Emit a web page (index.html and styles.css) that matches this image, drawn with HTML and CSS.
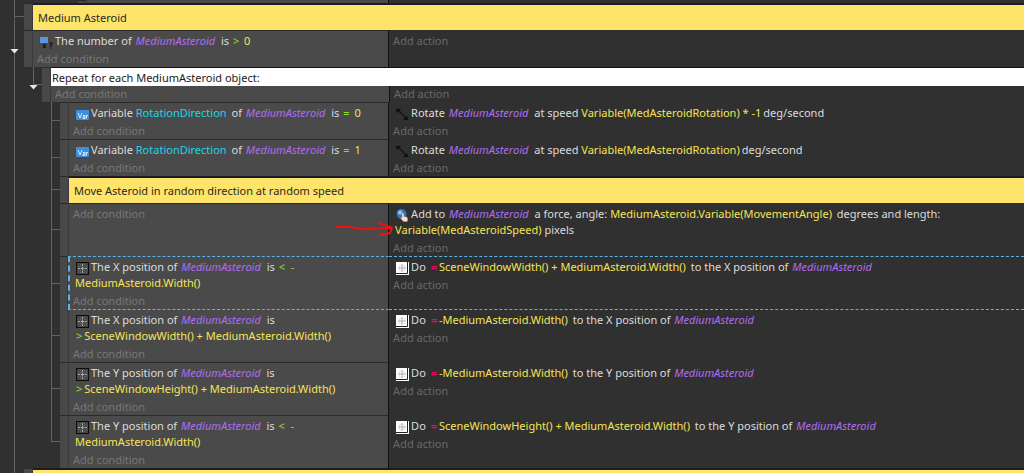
FILE: index.html
```
<!DOCTYPE html>
<html lang="en">
<head>
  <meta charset="UTF-8">
  <title>Events Sheet</title>
  <link rel="stylesheet" href="styles.css">
</head>
<body>
  <svg class="defs" width="0" height="0">
    <symbol id="icon-count" viewBox="0 0 13 13">
      <rect x="0" y="1" width="8" height="6" fill="#5b93e0"/>
      <path d="M3 8l3 4M6 8l-3 4M9.500 7.500q1.500-1.500 2.500 0q0 1-1.500 2v1M10.500 11.500v1" stroke="#111" stroke-width="1.200" fill="none"/>
    </symbol>
    <symbol id="icon-var" viewBox="0 0 13 13">
      <rect x="0" y="2" width="13" height="10" rx="1" fill="#3f8fe0"/>
      <path d="M2 5l2 5l2-5M7 7.500h2v3h-2v-1.500h2M10.500 10.500v-3h1.500" stroke="#d5e8fa" fill="none"/>
    </symbol>
    <symbol id="icon-rotate" viewBox="0 0 13 13">
      <path d="M2 2l9 9" stroke="#111" stroke-width="1.200"/>
      <path d="M0 1h5l-4 4zM12 12h-5l4-4z" fill="#0c0c0c"/>
    </symbol>
    <symbol id="icon-force" viewBox="0 0 13 13">
      <circle cx="5.500" cy="5" r="5" fill="#2f74c4"/>
      <circle cx="4" cy="3.500" r="2.200" fill="#8dbdec"/>
      <path d="M6 4.500q1-1 1.800 0v3l3 .5q1.500 1 .5 4.500h-4l-2.500-3q0-1.500 1.200-.5z" fill="#fbe0c0" stroke="#b88a62" stroke-width=".4"/>
    </symbol>
    <symbol id="icon-pos" viewBox="0 0 13 13">
      <rect x=".5" y=".5" width="12" height="12" fill="#484848" stroke="#0c0c0c"/>
      <path d="M6.500 2v9M2 6.500h9" stroke="#aaa"/>
      <path d="M4.500 2v9M8.500 2v9M2 4.500h9M2 8.500h9" stroke="#666" stroke-dasharray="1 1"/>
    </symbol>
    <symbol id="icon-set" viewBox="0 0 13 13">
      <rect width="13" height="13" fill="#fff"/>
      <path d="M11.500 0v11.500H0" stroke="#222" fill="none"/>
      <path d="M6 2v8M2 6h8" stroke="#aaa"/>
      <path d="M3.500 3.500h5v5h-5z" stroke="#ccc" stroke-dasharray="1 1" fill="none"/>
    </symbol>
  </svg>

  <main class="sheet">
    <div class="row stub">
      <div class="left"><i class="rail"></i><i class="rail-gap"></i><i class="handle"></i><div class="conditions"></div></div>
      <div class="actions"></div>
    </div>

    <div class="comment-row">
      <i class="rail tick"></i><i class="handle"></i>
      <p class="comment">Medium Asteroid</p>
    </div>

    <div class="row">
      <div class="left">
        <div class="rail"><button class="fold" aria-label="Fold event"></button></div><i class="handle"></i>
        <div class="conditions">
          <p><svg class="icon"><use href="#icon-count"/></svg>The number of <em>MediumAsteroid</em> is <b class="op">&gt;</b> <b>0</b></p>
          <button class="add">Add condition</button>
        </div>
      </div>
      <div class="actions"><button class="add">Add action</button></div>
    </div>

    <div class="repeat">
      <div class="rail"></div>
      <div class="rail sub"><button class="fold" aria-label="Fold loop"></button></div><i class="handle"></i>
      <div class="repeat-body">
        <p class="repeat-title">Repeat for each MediumAsteroid object:</p>
        <div class="repeat-cells">
          <div class="conditions"><button class="add">Add condition</button></div>
          <div class="actions"><button class="add">Add action</button></div>
        </div>
      </div>
    </div>

    <div class="row">
      <div class="left">
        <i class="rail"></i><i class="rail deep tick"></i><i class="handle"></i>
        <div class="conditions">
          <p><svg class="icon"><use href="#icon-var"/></svg>Variable <span class="var">RotationDirection</span> of <em>MediumAsteroid</em> is <b class="op">=</b> <b>0</b></p>
          <button class="add">Add condition</button>
        </div>
      </div>
      <div class="actions">
        <p><svg class="icon"><use href="#icon-rotate"/></svg>Rotate <em>MediumAsteroid</em> at speed <b class="arg">Variable(MedAsteroidRotation) * -1</b>deg/second</p>
        <button class="add">Add action</button>
      </div>
    </div>

    <div class="row">
      <div class="left">
        <i class="rail"></i><i class="rail deep tick"></i><i class="handle"></i>
        <div class="conditions">
          <p><svg class="icon"><use href="#icon-var"/></svg>Variable <span class="var">RotationDirection</span> of <em>MediumAsteroid</em> is <b class="op">=</b> <b>1</b></p>
          <button class="add">Add condition</button>
        </div>
      </div>
      <div class="actions">
        <p><svg class="icon"><use href="#icon-rotate"/></svg>Rotate <em>MediumAsteroid</em> at speed <b class="arg">Variable(MedAsteroidRotation)</b>deg/second</p>
        <button class="add">Add action</button>
      </div>
    </div>

    <div class="comment-row">
      <i class="rail"></i><i class="rail deep tick"></i><i class="handle"></i>
      <p class="comment">Move Asteroid in random direction at random speed</p>
    </div>

    <div class="row">
      <div class="left">
        <i class="rail"></i><i class="rail deep tick"></i><i class="handle"></i>
        <div class="conditions"><button class="add">Add condition</button></div>
      </div>
      <div class="actions">
        <p><svg class="icon"><use href="#icon-force"/></svg>Add to <em>MediumAsteroid</em> a force, angle: <b class="arg">MediumAsteroid.Variable(MovementAngle)</b> degrees and length: <b>Variable(MedAsteroidSpeed)</b> pixels</p>
        <button class="add">Add action</button>
        <svg class="pointer" viewBox="0 0 60 16" aria-hidden="true">
          <path d="M1 6L14 6L24 8L56 7M43 2L49 4L56 7L54 12L44 14" fill="none" stroke="#f01010" stroke-width="2" stroke-linecap="round" stroke-linejoin="round"/>
        </svg>
      </div>
    </div>

    <div class="row selected">
      <div class="left">
        <i class="rail"></i><i class="rail deep tick"></i><i class="handle"></i>
        <div class="conditions">
          <p><svg class="icon"><use href="#icon-pos"/></svg>The X position of <em>MediumAsteroid</em> is <b class="op">&lt;</b> <b class="op">-</b> <b class="expr">MediumAsteroid.Width()</b></p>
          <button class="add">Add condition</button>
        </div>
      </div>
      <div class="actions">
        <p><svg class="icon"><use href="#icon-set"/></svg>Do <b class="set">=</b><b class="arg">SceneWindowWidth() + MediumAsteroid.Width()</b> to the X position of <em>MediumAsteroid</em></p>
        <button class="add">Add action</button>
      </div>
    </div>

    <div class="row">
      <div class="left">
        <i class="rail"></i><i class="rail deep tick"></i><i class="handle"></i>
        <div class="conditions">
          <p><svg class="icon"><use href="#icon-pos"/></svg>The X position of <em>MediumAsteroid</em> is <b class="expr"><b class="op">&gt;</b>SceneWindowWidth() + MediumAsteroid.Width()</b></p>
          <button class="add">Add condition</button>
        </div>
      </div>
      <div class="actions">
        <p><svg class="icon"><use href="#icon-set"/></svg>Do <b class="set">=</b><b class="arg">-MediumAsteroid.Width()</b> to the X position of <em>MediumAsteroid</em></p>
        <button class="add">Add action</button>
      </div>
    </div>

    <div class="row">
      <div class="left">
        <i class="rail"></i><i class="rail deep tick"></i><i class="handle"></i>
        <div class="conditions">
          <p><svg class="icon"><use href="#icon-pos"/></svg>The Y position of <em>MediumAsteroid</em> is <b class="expr"><b class="op">&gt;</b>SceneWindowHeight() + MediumAsteroid.Width()</b></p>
          <button class="add">Add condition</button>
        </div>
      </div>
      <div class="actions">
        <p><svg class="icon"><use href="#icon-set"/></svg>Do <b class="set">=</b><b class="arg">-MediumAsteroid.Width()</b> to the Y position of <em>MediumAsteroid</em></p>
        <button class="add">Add action</button>
      </div>
    </div>

    <div class="row">
      <div class="left">
        <i class="rail"></i><i class="rail deep tick last"></i><i class="handle"></i>
        <div class="conditions">
          <p><svg class="icon"><use href="#icon-pos"/></svg>The Y position of <em>MediumAsteroid</em> is <b class="op">&lt;</b> <b class="op">-</b> <b class="expr">MediumAsteroid.Width()</b></p>
          <button class="add">Add condition</button>
        </div>
      </div>
      <div class="actions">
        <p><svg class="icon"><use href="#icon-set"/></svg>Do <b class="set">=</b><b class="arg">SceneWindowHeight() + MediumAsteroid.Width()</b> to the Y position of <em>MediumAsteroid</em></p>
        <button class="add">Add action</button>
      </div>
    </div>

    <div class="comment-row">
      <i class="rail"></i><i class="handle"></i>
      <p class="comment"></p>
    </div>
  </main>
</body>
</html>
```

FILE: styles.css
```
body {
  margin: 0;
  height: 100vh;
  overflow: hidden;
  background: #303030;
  font-family: "Noto Sans", "Open Sans", sans-serif;
  font-size: 11px;
  line-height: 16px;
  color: #dcdcdc;
}

p {
  margin: 0;
}

b {
  font-weight: normal;
  color: #f5e556;
}

em {
  margin: 0 3px 0 1px;
  color: #b06cf5;
}

.defs {
  position: absolute;
}

.row {
  display: grid;
  grid-template-columns: 38% 1fr;
}

.left,
.comment-row,
.repeat {
  display: flex;
}

/* tree lines */
.rail {
  flex: none;
  position: relative;
  width: 10px;
  margin-left: 14px;
  background: linear-gradient(#626262, #626262) left / 1px 100% no-repeat;
}

.rail.tick {
  background:
    linear-gradient(#626262, #626262) left / 1px 100% no-repeat,
    linear-gradient(#626262, #626262) center / 100% 1px no-repeat;
}

.rail.last {
  background:
    linear-gradient(#626262, #626262) left top / 1px 50% no-repeat,
    linear-gradient(#626262, #626262) center / 100% 1px no-repeat;
}

.rail.sub {
  width: 9px;
  margin-left: 9px;
  background:
    linear-gradient(#626262, #626262) left top / 1px 50% no-repeat,
    linear-gradient(#626262, #626262) center / 100% 1px no-repeat;
}

.rail.deep {
  width: 9px;
  margin-left: 27px;
}

.rail-gap {
  flex: none;
  width: 54px;
}

.handle {
  flex: none;
  width: 8px;
  background: #484848;
  border-top: 1px solid #2a2a2a;
  border-right: 1px solid #3a3a3a;
}

.fold {
  position: absolute;
  top: 50%;
  left: -4px;
  width: 9px;
  height: 5px;
  padding: 0;
  border: none;
  background: #e8e8e8;
  clip-path: polygon(0 0, 100% 0, 50% 100%);
  cursor: pointer;
}

.conditions {
  flex: 1;
  background: #4a4a4a;
  border-top: 1px solid #2a2a2a;
  border-right: 1px solid #111;
  padding: 2px 4px 0 6px;
}

.actions {
  position: relative;
  padding: 3px 24px 0 6px;
}

.icon {
  width: 13px;
  height: 13px;
  margin: 0 2px 0 1px;
  vertical-align: -4px;
}

.var {
  margin-right: 2px;
  color: #1cd6e8;
}

.op {
  margin: 0 2px 0 1px;
  color: #8be02a;
}

.arg {
  margin-right: 2px;
}

.set {
  margin: 0 2px;
  font-weight: bold;
  color: #e5086a;
}

.expr {
  display: inline-block;
  white-space: nowrap;
}

.add {
  display: block;
  margin-left: -2px;
  padding: 0;
  border: none;
  background: none;
  font: inherit;
  color: #777;
  cursor: pointer;
}

.actions .add {
  color: #686868;
}

p + .add {
  margin-top: 2px;
}

.comment {
  flex: 1;
  min-height: 16px;
  padding: 5px 5px 4px;
  border-top: 2px solid #1c1c28;
  background: #ffe46b;
  color: #2a2a20;
}

.repeat-body {
  flex: 1;
  border-top: 1px solid #111;
}

.repeat-title {
  padding: 2px 1px 0;
  background: #fff;
  color: #1a1a1a;
}

.repeat-cells {
  display: flex;
}

.repeat-cells .conditions {
  flex: none;
  box-sizing: border-box;
  width: calc(38vw - 50px);
  padding-top: 0;
  border-top: none;
}

.repeat-cells .actions {
  padding-top: 0;
}

/* the dashed frame overlaps the row below by one pixel */
.selected {
  position: relative;
  z-index: 1;
  margin-bottom: -1px;
}

.selected .conditions {
  border-left: 2px dashed #5ab4e8;
  padding-left: 5px;
}

.selected .conditions,
.selected .actions {
  border-top: 1px dashed #5ab4e8;
  border-bottom: 1px dashed #5ab4e8;
}

.selected .actions {
  padding-top: 2px;
}

.selected .handle {
  width: 7px;
}

.stub {
  height: 3px;
}

.stub .conditions,
.stub .actions {
  height: 3px;
  box-sizing: border-box;
  padding-top: 0;
  border-top: none;
}

.pointer {
  position: absolute;
  top: 18px;
  left: -53px;
  width: 60px;
  height: 16px;
}
```
